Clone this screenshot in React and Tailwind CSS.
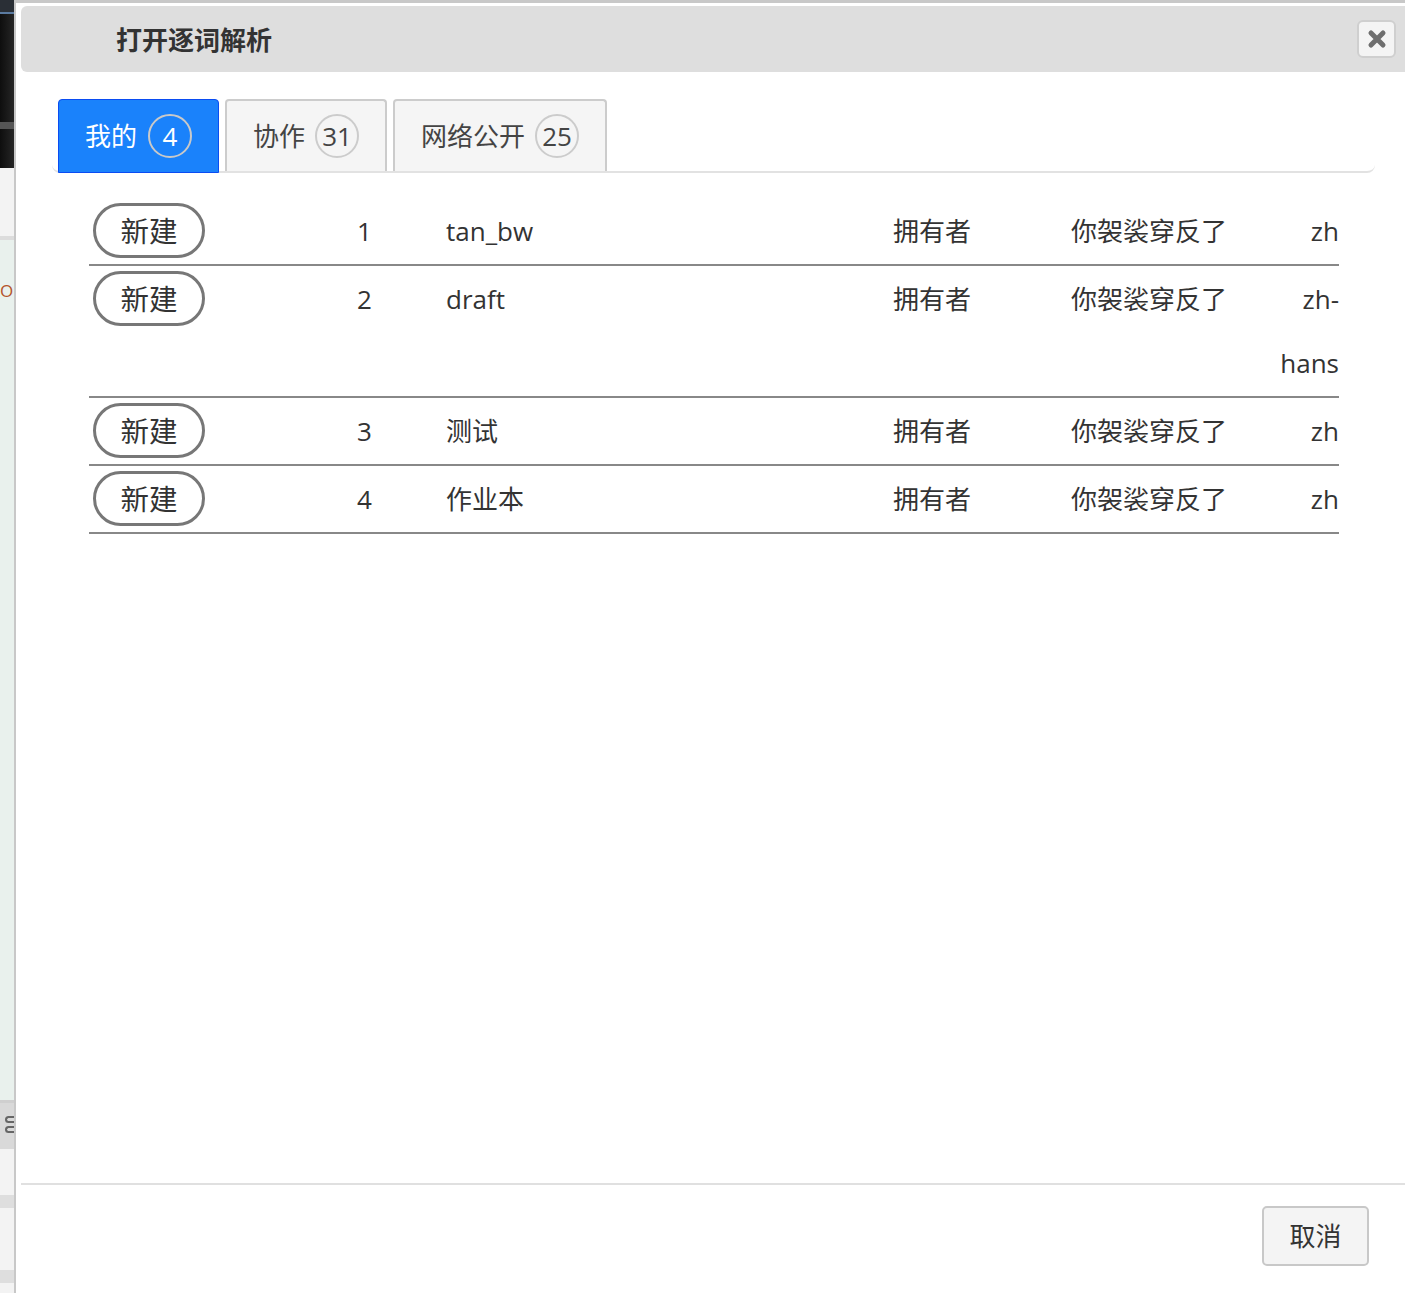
import React from "react";

const rows = [
  { n: 1, name: "tan_bw", lang: "zh" },
  { n: 2, name: "draft", lang: "zh-hans" },
  { n: 3, name: "测试", lang: "zh" },
  { n: 4, name: "作业本", lang: "zh" },
];

const tabs = [
  { label: "我的", count: 4, active: true },
  { label: "协作", count: 31 },
  { label: "网络公开", count: 25 },
];

function SideStrip() {
  return (
    <div className="w-[14px] shrink-0 flex flex-col overflow-hidden">
      <div className="h-[12px] bg-[#2a2f36]" />
      <div className="h-[2px] bg-[#5a7aa0]" />
      <div className="h-[108px] bg-gradient-to-r from-[#0e0e0e] to-[#262626]" />
      <div className="h-[7px] bg-[#555]" />
      <div className="h-[39px] bg-gradient-to-r from-[#0e0e0e] to-[#262626]" />
      <div className="h-[68px] bg-[#f3f3f3]" />
      <div className="h-[4px] bg-[#dcdcdc]" />
      <div className="h-[860px] bg-[#e9f1ed] pt-[42px]">
        <span className="block text-[17px] leading-none text-[#b4542a] font-['Open_Sans',sans-serif]">O</span>
      </div>
      <div className="h-[3px] bg-[#cfcfcf]" />
      <div className="h-[46px] bg-[#d9d9d9] flex flex-col items-end gap-[3px] pt-[13px]">
        <div className="w-[9px] h-[7px] border-2 border-r-0 border-[#666] rounded-l-sm" />
        <div className="w-[9px] h-[7px] border-2 border-r-0 border-[#666] rounded-l-sm" />
      </div>
      <div className="h-[46px] bg-[#f3f3f3]" />
      <div className="h-[13px] bg-[#dedede]" />
      <div className="h-[62px] bg-[#f3f3f3]" />
      <div className="h-[13px] bg-[#dedede]" />
      <div className="flex-1 bg-[#f3f3f3]" />
    </div>
  );
}

export default function App() {
  return (
    <div className="w-[1405px] h-[1293px] flex overflow-hidden bg-white font-['Open_Sans','Noto_Sans_CJK_SC',sans-serif] text-[#333]">
      <SideStrip />
      <div className="flex-1 flex flex-col border-l-2 border-t-[3px] border-[#c8c8c8] bg-white min-w-0">
        {/* header */}
        <div className="mt-[3px] ml-[5px] h-[66px] shrink-0 bg-[#dedede] rounded-l-md flex items-center justify-between pl-[95px] pr-[9px]">
          <h1 className="text-[26px] font-bold text-[#333] leading-none pt-[2px]">打开逐词解析</h1>
          <button className="w-[39px] h-[38px] bg-[#f4f4f4] border-2 border-[#cfcfcf] rounded-md flex items-center justify-center">
            <svg width="20" height="20" viewBox="0 0 20 20">
              <path d="M4 4 L16 16 M16 4 L4 16" stroke="#6e6e6e" strokeWidth="5" strokeLinecap="round" />
            </svg>
          </button>
        </div>

        {/* tabs */}
        <div className="mt-[27px] ml-[36px] mr-[30px] pl-[6px] flex gap-[6px] border-b-2 border-[#e2e2e2] rounded-b-lg">
          {tabs.map((t) =>
            t.active ? (
              <div
                key={t.label}
                className="h-[74px] -mb-[2px] flex items-center gap-[11px] px-[26px] bg-[#1a82fb] border border-[#0a4cf2] rounded-t-[4px] text-white"
              >
                <span className="text-[26px]">{t.label}</span>
                <span className="w-[44px] h-[44px] rounded-full border-2 border-[#c9c9c9] flex items-center justify-center text-[26px]">
                  {t.count}
                </span>
              </div>
            ) : (
              <div
                key={t.label}
                className="h-[72px] flex items-center gap-[10px] px-[26px] bg-[#f5f5f5] border-2 border-b-0 border-[#cccccc] rounded-t-[4px] text-[#444]"
              >
                <span className="text-[26px]">{t.label}</span>
                <span className="w-[44px] h-[44px] rounded-full border-2 border-[#cccccc] flex items-center justify-center text-[26px]">
                  {t.count}
                </span>
              </div>
            )
          )}
        </div>

        {/* list */}
        <div className="mt-[25px] ml-[73px] w-[1250px] text-[26px]">
          {rows.map((r) => (
            <div key={r.n} className="flex items-start border-b-2 border-[#888] leading-[64px] pt-px pb-px">
              <div className="w-[268px] pl-[4px] pt-[4px] shrink-0">
                <button className="w-[112px] h-[55px] rounded-full border-[3px] border-[#777] bg-white flex items-center justify-center text-[28.5px] leading-none text-[#333] pt-[2px]">
                  新建
                </button>
              </div>
              <div className="w-[89px] shrink-0">{r.n}</div>
              <div className="w-[447px] shrink-0">{r.name}</div>
              <div className="w-[178px] shrink-0">拥有者</div>
              <div className="flex-1">你袈裟穿反了</div>
              <div className="w-[60px] shrink-0 text-right break-words">{r.lang}</div>
            </div>
          ))}
        </div>

        <div className="flex-1" />

        {/* footer */}
        <div className="ml-[5px] h-[110px] shrink-0 border-t-2 border-[#e0e0e0] flex justify-end items-start pt-[21px] pr-[36px]">
          <button className="w-[107px] h-[60px] bg-[#f4f4f4] border-2 border-[#c8c8c8] rounded-[5px] text-[26px] text-[#333]">
            取消
          </button>
        </div>
      </div>
    </div>
  );
}
